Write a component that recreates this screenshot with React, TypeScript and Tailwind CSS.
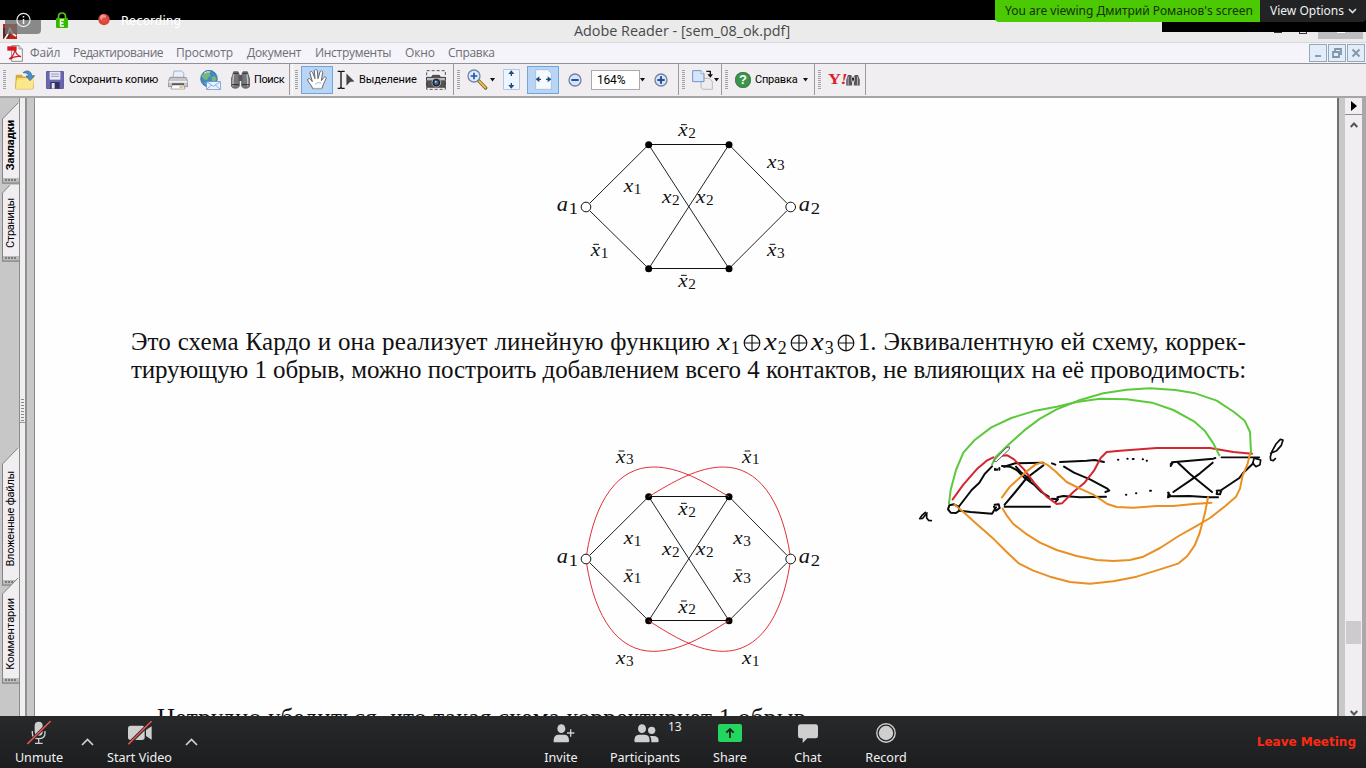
import React from "react";

/* ---------- toolbar icons ---------- */

const OpenIcon = () => (
  <svg width="20" height="20" viewBox="0 0 60 60">
    <path d="M2 18q0-4 4-4h14l5 6h22v36H2z" fill="#d9a93a" />
    <path d="M5 22h50v32q0 3-3 3H5q-4 0-4-4z" fill="#f7dc6c" stroke="#c99b2c" strokeWidth="2" />
    <path d="M5 30L57 24 53 56H4z" fill="#fbe88c" />
    <path d="M24 8C36-2 50 4 50 17h9L45 32 33 18h8C40 10 33 8 24 8z" fill="#4f8fc9" stroke="#2c5f96" strokeWidth="2" />
  </svg>
);

const SaveIcon = () => (
  <svg width="18" height="18" viewBox="0 0 54 54">
    <rect x="1" y="1" width="52" height="52" rx="3" fill="#6a66b4" stroke="#3c3a78" strokeWidth="2" />
    <rect x="11" y="2" width="32" height="24" fill="#e9e9f4" />
    <path d="M15 9h24M15 16h24" stroke="#9a98c0" strokeWidth="3" />
    <rect x="13" y="33" width="28" height="20" fill="#33325e" />
    <rect x="17" y="36" width="9" height="17" fill="#e4e4ee" />
  </svg>
);

const PrinterIcon = () => (
  <svg className="shrink-0" width="20" height="20" viewBox="0 0 60 60">
    <path d="M14 26L18 3h22l8 7-2 16z" fill="#e6effb" stroke="#8494b0" strokeWidth="2" />
    <path d="M4 26q0-4 5-4h42q5 0 5 4l3 10v14H1V36z" fill="#c6c6c8" stroke="#77777b" strokeWidth="2" />
    <rect x="2" y="33" width="56" height="5" fill="#efeff0" />
    <rect x="12" y="40" width="36" height="6" fill="#47474c" />
    <path d="M13 45h34l4 12H9z" fill="#fff" stroke="#888" strokeWidth="2" />
    <path d="M34 51h12" stroke="#d9a832" strokeWidth="4" />
  </svg>
);

const GlobeMailIcon = () => (
  <svg width="21" height="20" viewBox="0 0 63 60">
    <circle cx="27" cy="26" r="25" fill="#4488c4" stroke="#235b92" strokeWidth="2" />
    <path d="M14 8q10-6 18-4l-4 8 5 5-9 6-3 8-11-4-6-10zM34 22l10-4 6 8-6 10-8-3zM10 36l9 3 3 9z" fill="#76b87c" />
    <path d="M12 10q8-7 18-4" stroke="#d8edff" strokeWidth="3" fill="none" />
    <rect x="20" y="35" width="41" height="23" fill="#e9f3ff" stroke="#5d8fc6" strokeWidth="2" />
    <path d="M20 35l20 14 21-14M20 58l15-13M61 58L46 45" fill="none" stroke="#5d8fc6" strokeWidth="2" />
  </svg>
);

const BinocularsIcon = () => (
  <svg width="19" height="19" viewBox="0 0 57 57">
    <path d="M8 5h13l4 10v34q-4 6-12 6T1 49V27z" fill="#77777a" stroke="#424246" strokeWidth="2" />
    <path d="M49 5H36l-4 10v34q4 6 12 6t12-6V27z" fill="#77777a" stroke="#424246" strokeWidth="2" />
    <rect x="23" y="15" width="11" height="18" fill="#57575b" />
    <path d="M8 13q-3 18-2 36M48 13q3 18 2 36" stroke="#c1c1c3" strokeWidth="4" fill="none" />
    <path d="M2 44h22M33 44h22M8 10h14M35 10h14" stroke="#2e2e31" strokeWidth="3" />
  </svg>
);

const HandIcon = () => (
  <svg width="20" height="21" viewBox="0 0 60 63">
    <path
      d="M17 59C14 47 4 42 2 33c0-5 5-6 8-2l6 7-7-25c-1-6 6-8 8-2l7 18-2-23c0-6 8-6 9 0l2 23 6-20c2-6 9-4 8 2l-4 24 7-9c4-5 9-2 7 3-5 12-9 16-12 30z"
      fill="#fff"
      stroke="#65656d"
      strokeWidth="3"
    />
    <path d="M18 58h27M25 45q8-7 18-3" stroke="#b5b5bb" strokeWidth="3" fill="none" />
  </svg>
);

const SelectIcon = () => (
  <svg width="18" height="20" viewBox="0 0 54 60">
    <path d="M2 4h7l3 2 3-2h8M12 5v48M2 55h7l3-2 3 2h8" fill="none" stroke="#111" strokeWidth="4" />
    <path d="M29 12l22 22-12 1-10 11z" fill="#45454b" stroke="#222" strokeWidth="1" />
  </svg>
);

const CameraIcon = () => (
  <svg className="shrink-0" width="20" height="20" viewBox="0 0 60 60">
    <rect x="2" y="2" width="56" height="56" fill="none" stroke="#55555a" strokeWidth="3" strokeDasharray="9 6" />
    <path d="M2 22h14l4-6h20l4 6h14v30H2z" fill="#515156" stroke="#29292c" strokeWidth="2" />
    <path d="M3 24h54v7H3z" fill="#b9bbc0" />
    <circle cx="31" cy="38" r="13" fill="#1e2228" stroke="#a8a8ad" strokeWidth="3" />
    <circle cx="31" cy="38" r="7" fill="#3e6796" />
    <circle cx="29" cy="35" r="2.5" fill="#cfe2f5" />
  </svg>
);

const MagnifierIcon = () => (
  <svg width="21" height="21" viewBox="0 0 63 63">
    <path d="M34 34l22 23" stroke="#7b5522" strokeWidth="10" strokeLinecap="round" />
    <path d="M37 37l18 19" stroke="#f0c04f" strokeWidth="6" strokeLinecap="round" />
    <circle cx="21" cy="21" r="18" fill="#dcebff" stroke="#7186ad" strokeWidth="4" />
    <path d="M21 11v20M11 21h20" stroke="#24559f" strokeWidth="5" />
  </svg>
);

const FitHeightIcon = () => (
  <svg width="17" height="21" viewBox="0 0 51 63">
    <rect x="2" y="2" width="47" height="59" fill="#eef5ff" stroke="#90b2dd" strokeWidth="2" />
    <path d="M25 6v15M25 42v15" stroke="#1f4e7d" strokeWidth="4" />
    <path d="M16 15l9-11 9 11zM16 48l9 11 9-11z" fill="#1f4e7d" />
  </svg>
);

const FitWidthIcon = () => (
  <svg width="17" height="21" viewBox="0 0 51 63">
    <path d="M2 2h36l11 11v48H2z" fill="#f6faff" stroke="#90b2dd" strokeWidth="2" />
    <path d="M5 31h13M33 31h13" stroke="#1f4e7d" strokeWidth="4" />
    <path d="M13 22L2 31l11 9zM38 22l11 9-11 9z" fill="#1f4e7d" />
  </svg>
);

const RoundIcon = ({ plus }: { plus?: boolean }) => (
  <svg width="14" height="14" viewBox="0 0 42 42">
    <circle cx="21" cy="21" r="18" fill="#d5e4fb" stroke="#75839f" strokeWidth="4" />
    <path d={plus ? "M21 10v22M10 21h22" : "M10 21h22"} stroke="#24509a" strokeWidth="6" />
  </svg>
);

const PagesIcon = () => (
  <svg width="21" height="20" viewBox="0 0 63 60">
    <path d="M27 25h24l10 9v24H34l-7-5z" fill="#ededee" stroke="#a0a0a4" strokeWidth="2" />
    <path d="M2 2h25l9 9v24H2z" fill="#d5e6fc" stroke="#6f93c4" strokeWidth="3" />
    <path d="M27 2v9h9" fill="#fff" stroke="#6f93c4" strokeWidth="2" />
    <path d="M43 4h12v12" stroke="#111" strokeWidth="4" fill="none" />
    <path d="M46 13h17l-8 10z" fill="#111" />
  </svg>
);

const HelpIcon = () => (
  <div className="flex h-4 w-4 items-center justify-center rounded-full bg-[#379746] font-['Liberation_Sans'] text-[13px] leading-none font-bold text-white ring-1 ring-[#4e7655] ring-inset">
    ?
  </div>
);

const Caret = () => (
  <svg width="5" height="4" viewBox="0 0 5 4">
    <path d="M0 0h5L2.5 3.5z" fill="#111" />
  </svg>
);

const PdfIcon = () => (
  <svg width="16" height="17" viewBox="0 0 48 51">
    <path d="M14 2h22l10 10v37H14z" fill="#fafafa" stroke="#77777b" strokeWidth="2.5" />
    <path d="M36 2v10h10" fill="#ddd" stroke="#77777b" strokeWidth="2" />
    <rect x="1" y="4" width="28" height="13" fill="#d9161c" />
    <path d="M6 42q14-7 18-28q4 18 18 21q-20-3-34 8" fill="none" stroke="#d9161c" strokeWidth="3.5" />
  </svg>
);

const Grip = () => (
  <div className="h-[20px] w-[3px] shrink-0 bg-[repeating-linear-gradient(180deg,#a2a1a4_0px,#a2a1a4_1px,transparent_1px,transparent_2px)]" />
);

/* ---------- diagram pieces ---------- */

type LabelProps = { x: number; y: number; sub: string; v?: string; bar?: boolean; big?: boolean };

const Label = ({ x, y, sub, v = "x", bar, big }: LabelProps) => (
  <g fill="#111" className="font-['Liberation_Serif',serif]">
    <text transform={`translate(${x} ${y + 3}) scale(${big ? 1.02 : 1.16} 1)`} fontSize={big ? 66 : 55} fontStyle="italic">
      {v}
    </text>
    <text transform={`translate(${x + (big ? 36 : 30)} ${y + (big ? 11 : 8)}) scale(1.12 1)`} fontSize={big ? 50 : 41}>
      {sub}
    </text>
    {bar && <path d={`M${x + 8} ${y - 32}h17`} stroke="#111" strokeWidth="3" />}
  </g>
);

const Hexagon = ({ cy }: { cy: number }) => (
  <g stroke="#111" strokeWidth="2.8" fill="none">
    <path d={`M149 ${cy - 11}L326 ${cy - 187}M149 ${cy + 11}L326 ${cy + 185}M741 ${cy - 11}L567 ${cy - 187}M741 ${cy + 11}L567 ${cy + 185}`} />
    <path d={`M326 ${cy - 187}L567 ${cy + 185}M567 ${cy - 187}L326 ${cy + 185}`} />
    <path d={`M326 ${cy - 187.5}H567M326 ${cy + 184.5}H567`} strokeWidth="3" />
    <circle cx="138" cy={cy} r="14.5" fill="#fff" strokeWidth="3" />
    <circle cx="752" cy={cy} r="14.5" fill="#fff" strokeWidth="3" />
    {[326, 567].map((x) =>
      [-187, 185].map((d) => <circle key={`${x}${d}`} cx={x} cy={cy + d} r="10.5" fill="#000" stroke="none" />)
    )}
  </g>
);

const FirstDiagram = () => (
  <svg className="mt-[12px] ml-[505px] block" width="300" height="190" viewBox="0 0 900 570">
    <Hexagon cy={291} />
    <Label x={415} y={76} sub="2" bar />
    <Label x={681} y={171} sub="3" />
    <Label x={251} y={243} sub="1" />
    <Label x={366} y={276} sub="2" />
    <Label x={468} y={276} sub="2" />
    <Label x={152} y={435} sub="1" bar />
    <Label x={681} y={435} sub="3" bar />
    <Label x={415} y={528} sub="2" bar />
    <Label x={50} y={300} v="a" sub="1" big />
    <Label x={776} y={300} v="a" sub="2" big />
  </svg>
);

const SecondDiagram = () => (
  <svg className="mt-[56px] ml-[505px] block" width="300" height="240" viewBox="0 0 900 720">
    <Hexagon cy={357} />
    <g fill="none" stroke="#e0202c" strokeWidth="2.8">
      <path d="M140 343C165 180 235 81 340 81C420 81 490 125 567 170" />
      <path d="M750 343C725 180 655 81 550 81C475 81 400 125 326 170" />
      <path d="M140 371C165 535 235 634 340 634C420 634 490 590 567 542" />
      <path d="M750 371C725 535 655 634 550 634C475 634 400 590 326 542" />
    </g>
    <Label x={228} y={65} sub="3" bar />
    <Label x={606} y={65} sub="1" bar />
    <Label x={415} y={222} sub="2" bar />
    <Label x={251} y={309} sub="1" />
    <Label x={580} y={309} sub="3" />
    <Label x={366} y={342} sub="2" />
    <Label x={468} y={342} sub="2" />
    <Label x={251} y={422} sub="1" bar />
    <Label x={580} y={422} sub="3" bar />
    <Label x={415} y={515} sub="2" bar />
    <Label x={228} y={669} sub="3" />
    <Label x={606} y={669} sub="1" />
    <Label x={50} y={366} v="a" sub="1" big />
    <Label x={776} y={366} v="a" sub="2" big />
  </svg>
);

const Handwriting = () => (
  <svg className="absolute top-[272px] left-[865px]" width="400" height="230" viewBox="0 0 1200 690" fill="none" strokeWidth="6" strokeLinejoin="round" strokeLinecap="round">
    <g stroke="#0a0a0a">
      <path d="M76 427L66 436 59 446 68 445 81 429M80 431L80 444 86 451 94 452" strokeWidth="5" />
      <path d="M148 406L162 403 177 411 178 422 168 429 152 428 144 418 148 406" />
      <path d="M178 408L215 360 238 338 254 312 276 289M180 422L212 426 276 431 288 412" />
      <path d="M285 296v4M291 300v-2M298 294v5" />
      <path d="M284 404L296 403 299 414 288 422 282 410" />
      <path d="M306 288L330 290 350 300 372 322 402 344 424 366 446 380" />
      <path d="M312 290L346 280 430 278M348 290L362 306 392 330" />
      <path d="M430 286L380 324 346 366 314 404M314 410H450" />
      <path d="M456 280L466 284M480 276L560 272 584 270 612 276" />
      <path d="M492 290L522 308 570 328 622 356 628 362 616 366" />
      <path d="M456 386L474 388 466 396M472 382L490 378 540 382 618 380" />
      <path d="M654 269h1M682 266h1M698 267h3M728 268h1M740 272h1M678 374h1M708 370h1M750 362h3" strokeWidth="6" />
      <path d="M812 282L818 278 812 288M816 277L870 272 940 266 946 264" />
      <path d="M834 278L870 312 936 366M938 278L900 310 870 332 820 366" />
      <path d="M804 368L812 378 804 382 806 368M816 379L868 378 926 382 954 382" />
      <path d="M950 362L964 361 960 373 950 372 952 362M964 360L1018 324 1030 308 1060 280" />
      <path d="M964 262H1078M1066 265L1082 270 1080 284 1068 290 1058 280 1062 266" strokeWidth="5" />
      <path d="M1112 250L1130 242 1144 226 1149 210 1141 208 1128 222 1116 244 1111 260 1112 270 1120 272 1126 266" strokeWidth="5" />
    </g>
    <g stroke="#d3262e">
      <path d="M158 388L190 344 230 298 260 272 280 262M306 257L322 256 342 268 372 298 402 338 440 380 470 402 486 400 520 366 552 340 582 302 602 264 620 246 660 242 770 234 930 234 1000 246 1056 251" />
    </g>
    <g stroke="#5cc93c">
      <path d="M147 400L152 360 168 300 190 248 224 210 274 172 334 144 406 122 470 110 530 96 600 86 680 88 756 98 820 120 882 154 914 182 940 220 958 256" />
      <path d="M276 284L286 262 330 220 372 182 420 146 470 118 540 90 610 70 680 59 750 55 826 60 886 70 950 92 1002 126 1034 152 1050 186 1053 248" />
    </g>
    <g stroke="#ea8f22">
      <path d="M306 382L328 352 356 326 380 304 406 284 424 278 442 284 466 304 500 336 540 356 580 374 622 402 650 411 700 413 770 408 820 408 880 402 934 398" />
      <path d="M1050 252L1042 284 1028 316 1020 356 1008 380 976 408 930 444 886 470 836 498 780 534 730 560 690 570 640 573 590 570 530 558 470 540 420 518 376 490 340 462 320 436 308 416" />
      <path d="M164 404L190 426 230 462 282 508 320 546 356 580 400 602 450 620 510 636 570 641 640 634 710 620 780 598 836 580 862 558 884 526 898 492 908 456 916 424 924 382" />
    </g>
    <path d="M282 272L318 234 328 230 328 238 290 274z" fill="#fff" stroke="#555" strokeWidth="3" />
  </svg>
);

/* ---------- document text ---------- */

const Var = ({ n }: { n: string }) => (
  <span>
    <i className="inline-block w-[14px] origin-left scale-x-[1.15] text-[25px] leading-none">x</i>
    <span className="relative top-[4px] text-[18px]">{n}</span>
  </span>
);

const Plus = () => (
  <svg className="mx-[3px] inline-block align-[-2px]" width="18" height="18" viewBox="0 0 18 18" fill="none" stroke="#111" strokeWidth="1.2">
    <circle cx="9" cy="9" r="7.8" />
    <path d="M9 1v16M1 9h16" />
  </svg>
);

const Page = () => (
  <div className="relative h-[618px] w-[1302px] overflow-hidden bg-[#fefefe] text-[#111]">
    <FirstDiagram />
    <div className="mt-[28px] ml-[96px] w-[1115px] font-['Liberation_Serif',serif] text-[25px] leading-[28px] whitespace-nowrap">
      <div className="h-[28px] tracking-[0.1px] [text-align-last:justify]">
        Это схема Кардо и она реализует линейную функцию{" "}
        <span className="tracking-normal">
          <Var n="1" /><Plus /><Var n="2" /><Plus /><Var n="3" /><Plus />1.
        </span>{" "}
        Эквивалентную ей схему, коррек-
      </div>
      <div className="h-[28px] tracking-[-0.12px] [text-align-last:justify]">
        тирующую 1 обрыв, можно построить добавлением всего 4 контактов, не влияющих на её проводимость:
      </div>
    </div>
    <SecondDiagram />
    <div className="mt-[24px] ml-[122px] w-[651px] font-['Liberation_Serif',serif] text-[25px] leading-[28px] tracking-[0.3px] whitespace-nowrap [text-align-last:justify]">
      Нетрудно убедиться, что такая схема корректирует 1 обрыв.
    </div>
    <Handwriting />
  </div>
);

/* ---------- side panel ---------- */

const SideTab = ({ text, h, slope, className }: { text: string; h: number; slope: number; className: string }) => (
  <div className={`relative flex w-[17px] items-start justify-center ${className}`}>
    <svg className="absolute inset-0" width="17" height={h} viewBox={`0 0 17 ${h}`}>
      <path d={`M${slope} 0L.5 ${slope}V${h - 1}H17V0z`} fill="#f0eef1" />
      <path d={`M${slope} 0L.5 ${slope}V${h - 1}`} fill="none" stroke="#858585" />
      <path d={`M1 ${h - 4}H17`} stroke="#bcbcbc" strokeWidth="4" />
      <path d={`M3 ${h - 4}H14`} stroke="#666" strokeWidth="1.5" strokeDasharray="2 1" />
      <path d={`M0 ${h - 1}H17`} stroke="#858585" strokeWidth="1.5" />
    </svg>
    <span className="relative rotate-180 font-['Roboto',sans-serif] text-[11px] leading-[15px] whitespace-nowrap text-black [writing-mode:vertical-rl]">
      {text}
    </span>
  </div>
);

const SidePanel = () => (
  <div className="flex h-[618px] w-[35px]">
    <div className="flex w-[19px] flex-col bg-[#c7c7c7] pl-[2px]">
      <SideTab text="Закладки" h={81} slope={16} className="mt-[5px] h-[81px] pt-[17px] [&>span]:font-bold" />
      <SideTab text="Страницы" h={77} slope={8} className="mt-px h-[77px] pt-[13px] [&>span]:tracking-[-0.3px]" />
      <SideTab text="Вложенные файлы" h={138} slope={16} className="mt-[186px] h-[138px] pt-[23px] [&>span]:tracking-[-0.2px]" />
      <SideTab text="Комментарии" h={106} slope={16} className="-mt-[8px] h-[106px] pt-[20px]" />
    </div>
    <div className="w-px bg-[#8b8b8b]" />
    <div className="flex w-[5px] flex-col items-center bg-[#f0eef1] pt-[301px]">
      <div className="h-[22px] w-[3px] bg-[repeating-linear-gradient(180deg,#888_0px,#888_1px,transparent_1px,transparent_3px)]" />
      <div className="mt-[1px] h-px w-full bg-[#999]" />
    </div>
    <div className="w-[2px] bg-[#909090]" />
    <div className="w-[7px] bg-[#c8c8c8]" />
    <div className="w-px bg-[#8b8b8b]" />
  </div>
);

const RightEdge = () => (
  <div className="flex h-[618px] w-[29px]">
    <div className="w-[2px] bg-[#707070]" />
    <div className="w-[6px] bg-[#c8c8c8]" />
    <div className="flex w-[17px] flex-col items-center bg-[#f0eef1]">
      <div className="flex h-[17px] w-full shrink-0 items-center justify-center border-b border-[#8f8f8f]">
        <svg width="6" height="10" viewBox="0 0 6 10"><path d="M0 0v10l6-5z" /></svg>
      </div>
      <svg className="mt-[7px] shrink-0" width="8" height="6" viewBox="0 0 8 6"><path d="M.7 5L4 1.5 7.3 5" fill="none" stroke="#555" strokeWidth="2" /></svg>
      <div className="mt-[493px] h-[23px] w-[15px] shrink-0 bg-[#cdcbce]" />
      <svg className="mt-[66px] shrink-0" width="8" height="6" viewBox="0 0 8 6"><path d="M.7 1L4 4.5 7.3 1" fill="none" stroke="#555" strokeWidth="2" /></svg>
    </div>
    <div className="w-[4px] bg-[#a9a9a9]" />
  </div>
);

/* ---------- window bars ---------- */

const WinButton = ({ d }: { d: string }) => (
  <div className="flex h-[18px] w-[18px] items-center justify-center border border-[#96a9bb] bg-[#e1edf9]">
    <svg width="10" height="10" viewBox="0 0 10 10" fill="none" stroke="#8395a9" strokeWidth="1.8"><path d={d} /></svg>
  </div>
);

const MenuBar = () => (
  <div className="flex h-[21px] items-center border-t border-[#d8d8db] bg-[#f5f4fa] pl-[7px] font-['Open_Sans',sans-serif] text-[12px] leading-none tracking-[-0.15px] text-[#6e6e73]">
    <PdfIcon />
    <span className="ml-[7px] w-[43px]">Файл</span>
    <span className="w-[103px] tracking-[-0.5px]">Редактирование</span>
    <span className="w-[71px]">Просмотр</span>
    <span className="w-[68px] tracking-[-0.3px]">Документ</span>
    <span className="w-[90px] tracking-[-0.3px]">Инструменты</span>
    <span className="w-[43px]">Окно</span>
    <span className="tracking-[-0.3px]">Справка</span>
    <div className="mr-[1px] ml-auto flex gap-px">
      <WinButton d="M2 8h6" />
      <WinButton d="M3 3V1h6v5H7M1 4h6v5H1z" />
      <WinButton d="M1.5 1.5l7 7M8.5 1.5l-7 7" />
    </div>
  </div>
);

const seg = "flex h-[31px] shrink-0 items-center border-r border-[#9b9a9d]";

const Toolbar = () => (
  <div className="flex h-[35px] border-t border-b-2 border-t-[#929194] border-b-[#a5a4a7] bg-[#f0eef1] font-['Roboto',sans-serif] text-[11px] leading-none text-black">
    <div className={`${seg} w-[290px] pl-[3px]`}>
      <Grip />
      <div className="ml-[9px]"><OpenIcon /></div>
      <div className="ml-[11px]"><SaveIcon /></div>
      <span className="ml-[5px] w-[99px] tracking-[-0.15px] whitespace-nowrap">Сохранить копию</span>
      <PrinterIcon />
      <div className="ml-[12px]"><GlobeMailIcon /></div>
      <div className="ml-[10px]"><BinocularsIcon /></div>
      <span className="ml-[4px] tracking-[-0.4px]">Поиск</span>
    </div>
    <div className={`${seg} ml-[2px] w-[162px] border-l border-l-white pl-[2px]`}>
      <Grip />
      <div className="ml-[3px] flex h-[28px] w-[32px] items-center justify-center border border-[#6fa5d8] bg-[#b9d5f5]"><HandIcon /></div>
      <div className="ml-[4px]"><SelectIcon /></div>
      <span className="ml-[4px] w-[67px] tracking-[-0.1px]">Выделение</span>
      <CameraIcon />
    </div>
    <div className={`${seg} w-[225px] pl-[3px]`}>
      <Grip />
      <div className="ml-[7px]"><MagnifierIcon /></div>
      <div className="ml-[2px]"><Caret /></div>
      <div className="ml-[8px]"><FitHeightIcon /></div>
      <div className="ml-[7px] flex h-[28px] w-[32px] items-center justify-center border border-[#6fa5d8] bg-[#b9d5f5]"><FitWidthIcon /></div>
      <div className="ml-[9px]"><RoundIcon /></div>
      <div className="ml-[9px] flex h-[20px] w-[49px] items-center border border-[#aaa] bg-white pl-[5px] text-[12px] tracking-[-0.2px]">164%</div>
      <div><Caret /></div>
      <div className="ml-[9px]"><RoundIcon plus /></div>
    </div>
    <div className={`${seg} w-[43px] pl-[3px]`}>
      <Grip />
      <div className="ml-[7px]"><PagesIcon /></div>
      <div className="ml-[1px]"><Caret /></div>
    </div>
    <div className={`${seg} w-[93px] pl-[3px]`}>
      <Grip />
      <div className="ml-[7px]"><HelpIcon /></div>
      <span className="ml-[4px] w-[48px] tracking-[-0.2px]">Справка</span>
      <Caret />
    </div>
    <div className={`${seg} w-[51px] pl-[3px]`}>
      <Grip />
      <span className="ml-[7px] w-[18px] origin-left scale-x-[1.2] font-['Liberation_Serif',serif] text-[15px] font-bold tracking-[-0.5px] text-[#d9202b]">Y<i>!</i></span>
      <svg width="14" height="12" viewBox="0 0 57 57" preserveAspectRatio="none">
        <path d="M8 5h13l4 10v40H1V27zM49 5H36l-4 10v40h24V27z" fill="#55555a" />
        <path d="M23 15h11v18H23zM9 12v40M47 12v40" stroke="#a5a5aa" strokeWidth="5" />
      </svg>
    </div>
  </div>
);

/* ---------- meeting overlays ---------- */

const Control = ({ label, w, children }: { label: string; w: string; children: React.ReactNode }) => (
  <div className={`relative flex shrink-0 flex-col items-center ${w}`}>
    <div className="flex h-[34px] items-center justify-center">{children}</div>
    <span className="font-['Noto_Sans',sans-serif] text-[12.6px] leading-[16px] whitespace-nowrap text-[#f2f2f2]">{label}</span>
  </div>
);

const Up = () => (
  <svg width="13" height="8" viewBox="0 0 13 8"><path d="M1 7l5.5-5.5L12 7" fill="none" stroke="#d0d0d0" strokeWidth="1.7" /></svg>
);

const MeetingBar = () => (
  <div className="flex h-[52px] bg-linear-to-b from-[#27292b] to-[#1c1d1f]">
    <Control label="Unmute" w="w-[78px]">
      <svg width="24" height="24" viewBox="0 0 72 72">
        <rect x="23" y="2" width="24" height="42" rx="12" fill="#cfcfcf" />
        <path d="M16 30v6q0 17 19 17t19-17v-6M35 53v14M24 67h23" stroke="#cfcfcf" strokeWidth="4" fill="none" />
        <path d="M3 68L70 1" stroke="#26282a" strokeWidth="9" />
        <path d="M1 69L71 0" stroke="#ef5350" strokeWidth="4.5" />
      </svg>
    </Control>
    <div className="w-[18px] pt-[22px] pl-[3px]"><Up /></div>
    <Control label="Start Video" w="w-[87px]">
      <svg width="26" height="24" viewBox="0 0 78 72">
        <rect x="3" y="14" width="50" height="43" rx="8" fill="#cfcfcf" />
        <path d="M57 27l17-11v40L57 45z" fill="#cfcfcf" />
        <path d="M5 69L73 2" stroke="#26282a" strokeWidth="10" />
        <path d="M4 70L74 0" stroke="#ef5350" strokeWidth="4.5" />
      </svg>
    </Control>
    <div className="w-[18px] pt-[22px] pl-[2px]"><Up /></div>
    <div className="ml-[320px] flex">
      <Control label="Invite" w="w-[80px]">
        <svg className="ml-[6px]" width="22" height="19" viewBox="0 0 66 57" fill="#cfcfcf">
          <ellipse cx="25" cy="14" rx="12" ry="13" />
          <path d="M2 55V47Q4 32 16 32h18q12 0 14 15v4q0 4-4 4z" />
          <path d="M42 27h22M53 16v22" stroke="#cfcfcf" strokeWidth="4" />
        </svg>
      </Control>
      <Control label="Participants" w="w-[88px]">
        <svg className="ml-[2px]" width="25" height="19" viewBox="0 0 75 57" fill="#cfcfcf">
          <ellipse cx="24" cy="14" rx="12" ry="13" />
          <path d="M1 50Q1 32 15 32h18q14 0 14 18 0 5-4 5H5q-4 0-4-5z" />
          <circle cx="53" cy="19" r="11" />
          <path d="M48 36h10q16 0 16 14 0 5-4 5H52q1-11-4-19z" />
        </svg>
        <span className="absolute top-[4px] left-[67px] font-['Noto_Sans',sans-serif] text-[12px] leading-[14px] text-[#eee]">13</span>
      </Control>
      <Control label="Share" w="w-[82px]">
        <svg width="24" height="18" viewBox="0 0 72 54">
          <rect width="72" height="54" rx="6" fill="#23d65d" />
          <path d="M36 42V15M25 26l11-11 11 11" fill="none" stroke="#202224" strokeWidth="5.5" />
        </svg>
      </Control>
      <Control label="Chat" w="w-[74px]">
        <svg width="20" height="19" viewBox="0 0 60 57" fill="#cfcfcf">
          <path d="M7 1h46q7 0 7 7v28q0 7-7 7H28L14 57V43H7q-7 0-7-7V8q0-7 7-7z" />
        </svg>
      </Control>
      <Control label="Record" w="w-[82px]">
        <svg width="20" height="20" viewBox="0 0 20 20"><circle cx="10" cy="10" r="9.2" fill="none" stroke="#cfcfcf" strokeWidth="1.4" /><circle cx="10" cy="10" r="7.2" fill="#cfcfcf" /></svg>
      </Control>
    </div>
    <span className="mt-[18px] mr-[10px] ml-auto font-['DejaVu_Sans',sans-serif] text-[12px] leading-[16px] font-bold whitespace-nowrap text-[#ff2a12]">Leave Meeting</span>
  </div>
);

const MeetingTop = () => (
  <>
    <div className="absolute top-[20px] left-0 flex h-[20px] w-[17px] items-center justify-center">
      <svg className="mt-[2px] ml-[2px]" width="14" height="15" viewBox="0 0 42 45"><rect width="42" height="45" fill="#b9251d" /><path d="M0 12h20v30H0z" fill="#5e2624" /><path d="M5 45q13-16 15-34 6 19 20 25" stroke="#fff" strokeWidth="5" fill="none" /></svg>
    </div>
    <div className="absolute top-[20px] left-[5px] h-[14px] w-[36px] rounded-br bg-[#707070]/80" />
    <div className="absolute top-[11px] left-[16px] flex items-center text-white">
      <svg width="15" height="17" viewBox="0 0 15 17" fill="none" stroke="#eee"><circle cx="7.5" cy="9" r="6.6" strokeWidth="1.2" /><path d="M7.500 8v5M7.500 5v1.500" strokeWidth="1.5" /></svg>
      <svg className="ml-[25px]" width="12" height="16" viewBox="0 0 12 16"><path d="M2.5 7V4.5Q2.5 1 6 1t3.500 3.500V7" fill="none" stroke="#4bc90c" strokeWidth="1.7" /><rect y="6" width="12" height="10" rx="1" fill="#35ba00" /><path d="M8 8H4.500v6H8M4.500 11h3" fill="none" stroke="#fff" strokeWidth="1.4" /></svg>
      <svg className="ml-[30px]" width="12" height="13" viewBox="0 0 12 13"><circle cx="6" cy="6.500" r="5.700" fill="#d8453b" /><circle cx="5" cy="4.500" r="3" fill="#f1958c" /><circle cx="6.500" cy="7" r="2.600" fill="#df5045" /></svg>
      <span className="relative top-px ml-[11px] font-['DejaVu_Sans',sans-serif] text-[12px] leading-[16px]">Recording</span>
    </div>
    <div className="absolute top-[20px] right-0 h-[12px] w-[204px] bg-black" />
    <div className="absolute top-[32px] left-[1274px] h-px w-[8px] bg-[#333]" />
    <div className="absolute top-[32px] left-[1299px] h-[2px] w-[8px] border border-t-0 border-[#333]" />
    <div className="absolute top-[32px] left-[1318px] flex h-[7px] w-[45px] justify-center bg-[#bdbcbe]"><div className="h-px w-[8px] bg-white" /></div>
    <div className="absolute top-0 left-[995px] flex h-[22px] w-[371px] overflow-hidden rounded-b font-['Noto_Sans',sans-serif] text-[12px] leading-[22px] whitespace-nowrap">
      <div className="w-[265px] shrink-0 bg-[#4bc902] pl-[10px] text-[#17310a]">You are viewing Дмитрий Романов's screen</div>
      <div className="flex flex-1 items-center bg-[#222325] pl-[10px] text-[#f0f0f0]">
        <span className="w-[78px]">View Options</span>
        <svg width="9" height="6" viewBox="0 0 9 6"><path d="M1 1l3.500 3.500L8 1" fill="none" stroke="#ddd" strokeWidth="1.700" /></svg>
      </div>
    </div>
  </>
);

export default function App() {
  return (
    <div className="relative flex h-[768px] w-[1366px] flex-col overflow-hidden bg-[#f0eef1]">
      <div className="h-[20px] bg-black" />
      <div className="flex h-[22px] items-center justify-center bg-[#ebebeb] font-['Open_Sans',sans-serif] text-[14.4px] leading-none text-[#49494b]">
        <span className="-ml-[2px]">Adobe Reader - [sem_08_ok.pdf]</span>
      </div>
      <MenuBar />
      <Toolbar />
      <div className="flex h-[618px]">
        <SidePanel />
        <Page />
        <RightEdge />
      </div>
      <MeetingBar />
      <MeetingTop />
    </div>
  );
}
